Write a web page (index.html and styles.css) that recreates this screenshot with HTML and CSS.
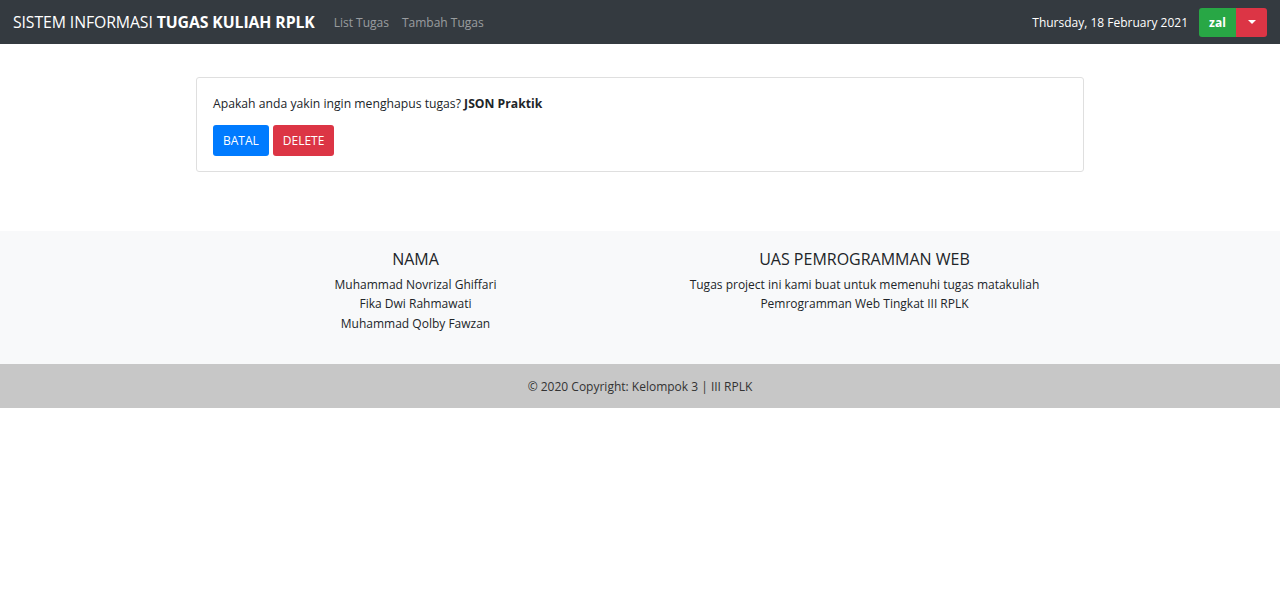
FILE: index.html
```html
<!DOCTYPE html>
<html lang="id">
<head>
<meta charset="utf-8">
<title>Sistem Informasi Tugas Kuliah RPLK</title>
<link rel="stylesheet" href="styles.css">
</head>
<body>
<nav class="navbar">
  <div class="nav-left">
    <a class="brand" href="#">SISTEM INFORMASI <b>TUGAS KULIAH RPLK</b></a>
    <a class="nav-link" href="#">List Tugas</a>
    <a class="nav-link" href="#">Tambah Tugas</a>
  </div>
  <div class="nav-right">
    <span class="date">Thursday, 18 February 2021</span>
    <div class="btn-group">
      <span class="btn-user">zal</span>
      <span class="btn-caret"><span class="caret"></span></span>
    </div>
  </div>
</nav>

<main class="main">
  <div class="card">
    <p class="confirm">Apakah anda yakin ingin menghapus tugas? <b>JSON Praktik</b></p>
    <div class="actions">
      <a class="btn btn-blue" href="#">BATAL</a>
      <a class="btn btn-red" href="#">DELETE</a>
    </div>
  </div>
</main>

<footer class="footer">
  <div class="footer-cols">
    <div class="col">
      <h5>NAMA</h5>
      <p>Muhammad Novrizal Ghiffari</p>
      <p>Fika Dwi Rahmawati</p>
      <p>Muhammad Qolby Fawzan</p>
    </div>
    <div class="col">
      <h5>UAS PEMROGRAMMAN WEB</h5>
      <p>Tugas project ini kami buat untuk memenuhi tugas matakuliah<br>Pemrogramman Web Tingkat III RPLK</p>
    </div>
  </div>
  <div class="copyright">© 2020 Copyright: Kelompok 3 | III RPLK</div>
</footer>
</body>
</html>
```

FILE: styles.css
```css
* { box-sizing: border-box; }
html, body { margin: 0; padding: 0; }
body {
  font-family: "Open Sans", "Noto Sans", sans-serif;
  font-size: 12.2px;
  color: #212529;
  background: #fff;
}
a { text-decoration: none; }

.navbar {
  height: 44px;
  background: #343a40;
  display: flex;
  align-items: center;
  justify-content: space-between;
  padding: 0 13px;
}
.nav-left { display: flex; align-items: center; }
.brand {
  color: #fff;
  font-size: 15.8px;
  margin-right: 19px;
  letter-spacing: -0.1px;
}
.brand b { font-weight: 700; }
.nav-link {
  color: rgba(255,255,255,0.5);
  font-size: 12px;
  margin-right: 13px;
}
.nav-right { display: flex; align-items: center; }
.date { color: #fff; font-size: 12px; margin-right: 11px; }
.btn-group { display: flex; height: 29px; border-radius: 3px; overflow: hidden; }
.btn-user {
  background: #28a745;
  color: #fff;
  font-weight: 700;
  width: 37px;
  display: flex; align-items: center; justify-content: center;
  font-size: 12px;
}
.btn-caret {
  background: #dc3545;
  width: 31px;
  display: flex; align-items: center; justify-content: center;
}
.caret {
  width: 0; height: 0;
  border-left: 4px solid transparent;
  border-right: 4px solid transparent;
  border-top: 4px solid #fff;
}

.main {
  width: 888px;
  margin: 33px auto 59px;
}
.card {
  border: 1px solid #dfdfdf;
  border-radius: 3px;
  padding: 16px 16px 15px;
}
.confirm { margin: 0 0 12px; line-height: 19px; }
.actions { display: flex; gap: 4px; }
.btn {
  color: #fff;
  height: 31px;
  padding: 0 10px;
  border-radius: 3px;
  display: flex; align-items: center;
  font-size: 12px;
}
.btn-blue { background: #007bff; }
.btn-red { background: #dc3545; }

.footer { background: #f8f9fa; }
.footer-cols {
  width: 898px;
  margin: 0 auto;
  display: grid;
  grid-template-columns: 1fr 1fr;
  padding: 17px 0 31px;
  text-align: center;
}
.col h5 {
  margin: 0 0 5px;
  font-size: 16px;
  font-weight: 500;
  line-height: 22px;
}
.col p { margin: 0; line-height: 19.4px; font-size: 12px; }
.copyright {
  background: #c7c7c7;
  height: 44px;
  display: flex; align-items: center; justify-content: center;
  color: #333;
  font-size: 12px;
}
```
